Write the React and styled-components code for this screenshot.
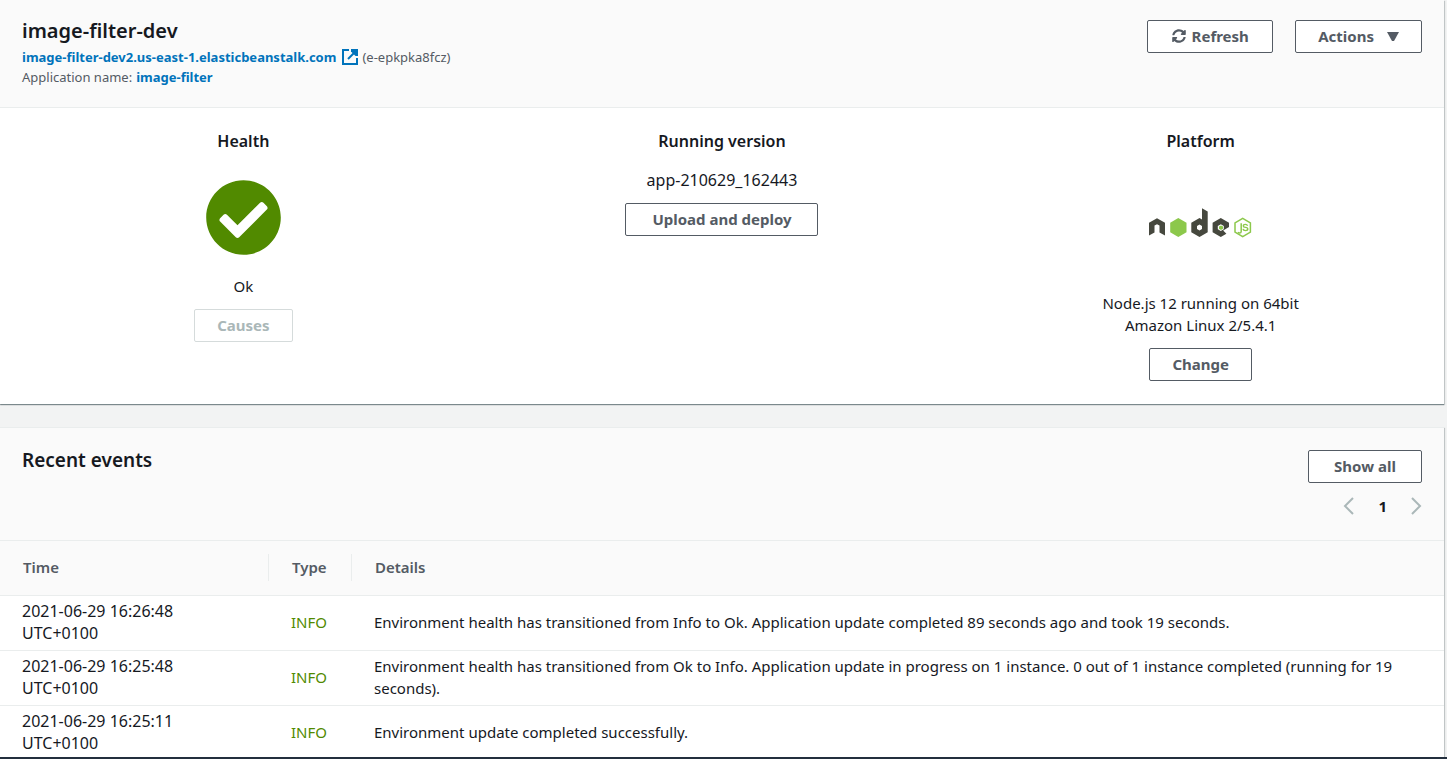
import React from "react";
import styled, { createGlobalStyle } from "styled-components";
import { FaCheckCircle, FaSyncAlt } from "react-icons/fa";

const GlobalStyle = createGlobalStyle`
  *, *::before, *::after { box-sizing: border-box; }
  html, body { margin: 0; padding: 0; }
  body {
    background: #f2f3f3;
    color: #16191f;
    font-family: "Noto Sans", "Open Sans", sans-serif;
    font-size: 15px;
    line-height: 22px;
  }
`;

const Page = styled.div`
  display: flex;
  flex-direction: column;
  height: 100vh;
`;

const Content = styled.main`
  flex: 1;
  min-height: 0;
  overflow: hidden;
  display: flex;
  flex-direction: column;
  gap: 23px;
  padding-right: 3px;
`;

const Footer = styled.footer`
  flex: none;
  height: 2px;
  background: #232f3e;
`;

const Panel = styled.section`
  flex: none;
  background: #fff;
  box-shadow: 0 1px 1px 0 rgba(0, 28, 36, 0.4), 1px 1px 1px 0 rgba(0, 28, 36, 0.15);
`;

const PanelHeader = styled.header`
  display: flex;
  justify-content: space-between;
  align-items: flex-start;
  padding: 20px 22px;
  background: #fafafa;
  border-bottom: 1px solid #eaeded;
  min-height: ${(p) => p.$minHeight}px;
`;

const EventsHeader = styled(PanelHeader)`
  border-top: 1px solid #eaeded;
  padding: 22px 22px 20px;
`;

const Title = styled.h1`
  margin: 0;
  font-size: 20px;
  font-weight: 600;
  line-height: 22px;
`;

const SectionTitle = styled.h2`
  margin: 0;
  font-size: 19px;
  font-weight: 600;
  line-height: 20px;
`;

const SubLine = styled.div`
  display: flex;
  align-items: center;
  gap: 4px;
  font-size: 13px;
  line-height: 20px;
  color: #545b64;
`;

const Heading = styled.div`
  display: flex;
  flex-direction: column;
  gap: 5px;
`;

const Link = styled.a`
  display: inline-flex;
  align-items: center;
  gap: 6px;
  color: #0073bb;
  font-weight: 700;
  text-decoration: none;
`;

const ButtonGroup = styled.div`
  display: flex;
  gap: 22px;
`;

const Button = styled.button`
  display: inline-flex;
  align-items: center;
  justify-content: center;
  gap: ${(p) => p.$gap || 6}px;
  height: 33px;
  min-width: ${(p) => p.$minWidth || 0}px;
  padding: 0 22px 2px;
  background: #fff;
  border: 1px solid #545b64;
  border-radius: 2px;
  color: #545b64;
  font: inherit;
  font-weight: 700;
  white-space: nowrap;
  cursor: pointer;

  &:disabled {
    border-color: #d5dbdb;
    color: #aab7b8;
    cursor: default;
  }
`;

const Summary = styled.div`
  display: grid;
  grid-template-columns: repeat(3, 1fr);
  padding: 22px 4px 23px;
`;

const SummaryColumn = styled.div`
  display: flex;
  flex-direction: column;
  align-items: center;
  text-align: center;
`;

const SummaryTitle = styled.h2`
  margin: 0 0 17px;
  font-size: 16px;
  font-weight: 600;
  line-height: 22px;
`;

const SummaryText = styled.p`
  margin: 0 0 12px;
  max-width: 220px;
`;

const VersionText = styled(SummaryText)`
  font-size: 16px;
`;

const Figure = styled.div`
  display: flex;
  align-items: center;
  height: ${(p) => p.$height}px;
  margin-bottom: ${(p) => p.$gap}px;
  color: #518a00;
`;

const Tools = styled.div`
  display: flex;
  flex-direction: column;
  align-items: flex-end;
  gap: 12px;
`;

const Pagination = styled.nav`
  display: flex;
  align-items: center;
  gap: 24px;
  font-weight: 700;
`;

const PageButton = styled.button`
  display: flex;
  padding: 0;
  border: 0;
  background: none;
  color: #aab7b8;
`;

const Table = styled.table`
  width: 100%;
  border-collapse: separate;
  border-spacing: 0;
  table-layout: fixed;
`;

const HeaderCell = styled.th`
  width: ${(p) => (p.$width ? p.$width + "px" : "auto")};
  padding: 13px 0 14px;
  background: #fafafa;
  border-bottom: 1px solid #eaeded;
  color: #545b64;
  font-weight: 600;
  text-align: left;
`;

const HeaderLabel = styled.div`
  padding: 2px 23px 3px;
  border-right: ${(p) => (p.$last ? "0" : "1px solid #eaeded")};
`;

const Cell = styled.td`
  padding: 4px 22px 6px;
  border-bottom: 1px solid #eaeded;
  color: ${(p) => (p.$info ? "#518a00" : "#16191f")};
`;

const TimeCell = styled(Cell)`
  padding-right: 72px;
  font-size: 16px;
`;

const ExternalIcon = () => (
  <svg width="16" height="16" viewBox="0 0 16 16" fill="none" stroke="currentColor" strokeWidth="2" aria-hidden="true">
    <path d="M7 1H1v14h14V9" />
    <path d="M14 2L6 10" />
    <path fill="currentColor" stroke="none" d="M9 0h7v7h-2.500L9 2.500z" />
  </svg>
);

const CaretIcon = () => (
  <svg width="12" height="10" viewBox="0 0 12 10" fill="currentColor" aria-hidden="true">
    <path d="M0 1h12L7 10H5z" />
  </svg>
);

const Chevron = ({ points }) => (
  <svg width="11" height="18" viewBox="0 0 11 18" fill="none" stroke="currentColor" strokeWidth="2" aria-hidden="true">
    <polyline points={points} />
  </svg>
);

const NodeLogo = () => (
  <svg width="103" height="30" viewBox="0 0 103 30" role="img" aria-label="Node.js">
    <g fill="#46483e" fillRule="evenodd">
      <path d="M0 14.800L8 10.300l8 4.500v12.700l-5.500-2.900v-7.100L8 16.200l-2.500 1.300v7.100L0 27.500z" />
      <path d="M53 0.300l5.700 3.200v20.800L50.500 29l-8.200-4.700v-9.600l8.200-4.700 2.500 1.400zM50.500 16.600l-2.500 1.400v3l2.500 1.400 2.500-1.400v-3z" />
      <path d="M71.800 10l8.200 4.700V19l-5.800 3.400 3.200 3.400-5.600 3.200-8.200-4.700v-9.600zM71.800 16.200l-3 1.700v3.400l3 1.700 3-1.700v-3.400z" />
    </g>
    <g fill="#8cc84b">
      <path d="M29.300 10l8.200 4.700v9.600L29.300 29l-8.100-4.700v-9.600z" />
      <path d="M72 17.500l2 1.100v2.200l-2 1.100-2-1.100v-2.200z" />
    </g>
    <g fill="none" stroke="#8cc84b">
      <path strokeWidth="1.500" d="M93.700 10.400l7.700 4.500v9.200l-7.700 4.500-7.700-4.500v-9.200z" />
      <path strokeWidth="1.500" d="M92.200 15.200v8.200q0 1.600-1.700 1.600-1 0-1.600-.7" />
      <path strokeWidth="1.400" d="M98.600 17.700q-.5-1.300-2.200-1.300-2.100 0-2.100 1.500 0 1.300 2.200 1.500 2.300.2 2.300 1.700t-2.300 1.500q-2.200 0-2.500-1.700" />
    </g>
  </svg>
);

const EVENTS = [
  {
    time: "2021-06-29 16:26:48 UTC+0100",
    type: "INFO",
    details:
      "Environment health has transitioned from Info to Ok. Application update completed 89 seconds ago and took 19 seconds.",
  },
  {
    time: "2021-06-29 16:25:48 UTC+0100",
    type: "INFO",
    details:
      "Environment health has transitioned from Ok to Info. Application update in progress on 1 instance. 0 out of 1 instance completed (running for 19 seconds).",
  },
  {
    time: "2021-06-29 16:25:11 UTC+0100",
    type: "INFO",
    details: "Environment update completed successfully.",
  },
];

export default function App() {
  return (
    <Page>
      <GlobalStyle />
      <Content>
        <Panel>
          <PanelHeader $minHeight={108}>
            <Heading>
              <Title>image-filter-dev</Title>
              <div>
                <SubLine>
                  <Link href="#environment">
                    image-filter-dev2.us-east-1.elasticbeanstalk.com
                    <ExternalIcon />
                  </Link>
                  <span>(e-epkpka8fcz)</span>
                </SubLine>
                <SubLine>
                  <span>Application name:</span>
                  <Link href="#application">image-filter</Link>
                </SubLine>
              </div>
            </Heading>
            <ButtonGroup>
              <Button type="button" $minWidth={126}>
                <FaSyncAlt size={14} aria-hidden="true" />
                Refresh
              </Button>
              <Button type="button" $gap={13}>
                Actions
                <CaretIcon />
              </Button>
            </ButtonGroup>
          </PanelHeader>
          <Summary>
            <SummaryColumn>
              <SummaryTitle>Health</SummaryTitle>
              <Figure $height={96} $gap={10}>
                <FaCheckCircle size={77} aria-hidden="true" />
              </Figure>
              <SummaryText>Ok</SummaryText>
              <Button type="button" disabled>
                Causes
              </Button>
            </SummaryColumn>
            <SummaryColumn>
              <SummaryTitle>Running version</SummaryTitle>
              <VersionText>app-210629_162443</VersionText>
              <Button type="button" $minWidth={193}>
                Upload and deploy
              </Button>
            </SummaryColumn>
            <SummaryColumn>
              <SummaryTitle>Platform</SummaryTitle>
              <Figure $height={108} $gap={15}>
                <NodeLogo />
              </Figure>
              <SummaryText>Node.js 12 running on 64bit Amazon Linux 2/5.4.1</SummaryText>
              <Button type="button">Change</Button>
            </SummaryColumn>
          </Summary>
        </Panel>
        <Panel>
          <EventsHeader $minHeight={114}>
            <SectionTitle>Recent events</SectionTitle>
            <Tools>
              <Button type="button" $minWidth={114}>
                Show all
              </Button>
              <Pagination aria-label="Event pages">
                <PageButton type="button" aria-label="Previous page">
                  <Chevron points="10,1 2,9 10,17" />
                </PageButton>
                <span>1</span>
                <PageButton type="button" aria-label="Next page">
                  <Chevron points="1,1 9,9 1,17" />
                </PageButton>
              </Pagination>
            </Tools>
          </EventsHeader>
          <Table>
            <thead>
              <tr>
                <HeaderCell scope="col" $width={269}>
                  <HeaderLabel>Time</HeaderLabel>
                </HeaderCell>
                <HeaderCell scope="col" $width={83}>
                  <HeaderLabel>Type</HeaderLabel>
                </HeaderCell>
                <HeaderCell scope="col">
                  <HeaderLabel $last>Details</HeaderLabel>
                </HeaderCell>
              </tr>
            </thead>
            <tbody>
              {EVENTS.map((event) => (
                <tr key={event.time}>
                  <TimeCell>{event.time}</TimeCell>
                  <Cell $info>{event.type}</Cell>
                  <Cell>{event.details}</Cell>
                </tr>
              ))}
            </tbody>
          </Table>
        </Panel>
      </Content>
      <Footer />
    </Page>
  );
}
